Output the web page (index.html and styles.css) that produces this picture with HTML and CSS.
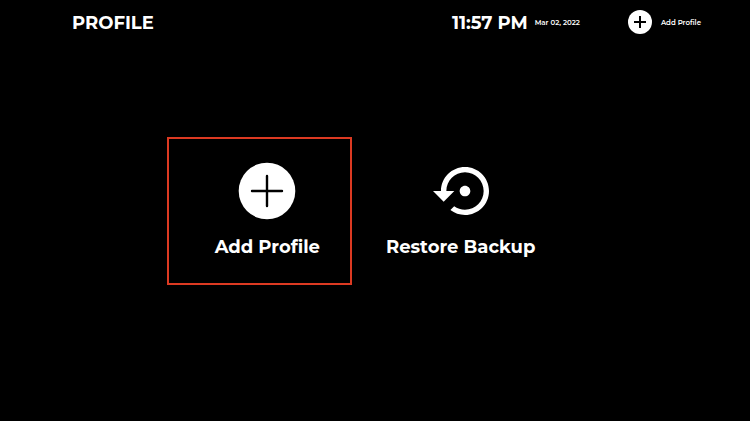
FILE: index.html
```html
<!DOCTYPE html>
<html lang="en">
<head>
  <meta charset="UTF-8">
  <meta name="viewport" content="width=device-width, initial-scale=1">
  <title>Profile</title>
  <link rel="stylesheet" href="styles.css">
</head>
<body>
  <header class="topbar">
    <h1 class="title">PROFILE</h1>
    <div class="clock">
      <span class="time">11:57 PM</span>
      <span class="date">Mar 02, 2022</span>
    </div>
    <button class="add-small" type="button">
      <svg width="24" height="24" viewBox="0 0 24 24" aria-hidden="true">
        <circle cx="12" cy="12" r="12" fill="#fff"/>
        <path d="M12 6v12M6 12h12" stroke="#000" stroke-width="2"/>
      </svg>
      Add Profile
    </button>
  </header>

  <main class="choices">
    <button class="tile selected" type="button">
      <svg width="64" height="64" viewBox="0 0 64 64" aria-hidden="true">
        <circle cx="32" cy="32" r="28.3" fill="#fff"/>
        <path d="M32 17v30M17 32h30" stroke="#000" stroke-width="2.4" stroke-linecap="round"/>
      </svg>
      Add Profile
    </button>
    <button class="tile restore" type="button">
      <svg class="restore-icon" width="64" height="64" viewBox="0 0 24 24" aria-hidden="true">
        <path fill="#fff" d="M14 12c0-1.1-.9-2-2-2s-2 .9-2 2 .9 2 2 2 2-.9 2-2zm-2-9c-4.97 0-9 4.03-9 9H0l4 4 4-4H5c0-3.87 3.13-7 7-7s7 3.13 7 7-3.13 7-7 7c-1.51 0-2.91-.49-4.06-1.3l-1.42 1.44C8.04 20.3 9.94 21 12 21c4.97 0 9-4.03 9-9s-4.03-9-9-9z"/>
      </svg>
      Restore Backup
    </button>
  </main>
</body>
</html>
```
FILE: styles.css
```css
* {
    box-sizing: border-box;
}
body {
    margin: 0;
    min-height: 100vh;
    display: flex;
    flex-direction: column;
    background-color: #000;
    color: #fff;
    font-family: Montserrat, Inter, sans-serif;
}
button {
    background: none;
    border: none;
    padding: 0;
    color: inherit;
    font-family: inherit;
    cursor: pointer;
}
.topbar {
    display: flex;
    align-items: center;
    height: 44px;
    padding: 0 49px 0 72px;
}
.title {
    margin: 0 auto 0 0;
    padding-top: 2px;
    font-size: 18px;
    font-weight: 700;
}
.clock {
    display: flex;
    align-items: center;
    gap: 7px;
    margin-right: 48px;
}
.time {
    padding-top: 2px;
    font-size: 18px;
    font-weight: 700;
}
.date {
    font-size: 7px;
    font-weight: 600;
}
.add-small {
    display: flex;
    align-items: center;
    gap: 9px;
    font-size: 7px;
    font-weight: 600;
}
.choices {
    flex: 1;
    display: flex;
    justify-content: center;
    align-items: center;
    padding-bottom: 44px;
}
.tile {
    display: flex;
    flex-direction: column;
    align-items: center;
    gap: 12px;
    height: 148px;
    padding: 20px 30px 20px 46px;
    border: 2px solid transparent;
    font-size: 18px;
    font-weight: 700;
    line-height: 24px;
}
.selected {
    border-color: #dc3a22;
}
.restore {
    padding: 20px 46px 20px 32px;
}
.restore-icon {
    margin-left: 8px;
}
```
